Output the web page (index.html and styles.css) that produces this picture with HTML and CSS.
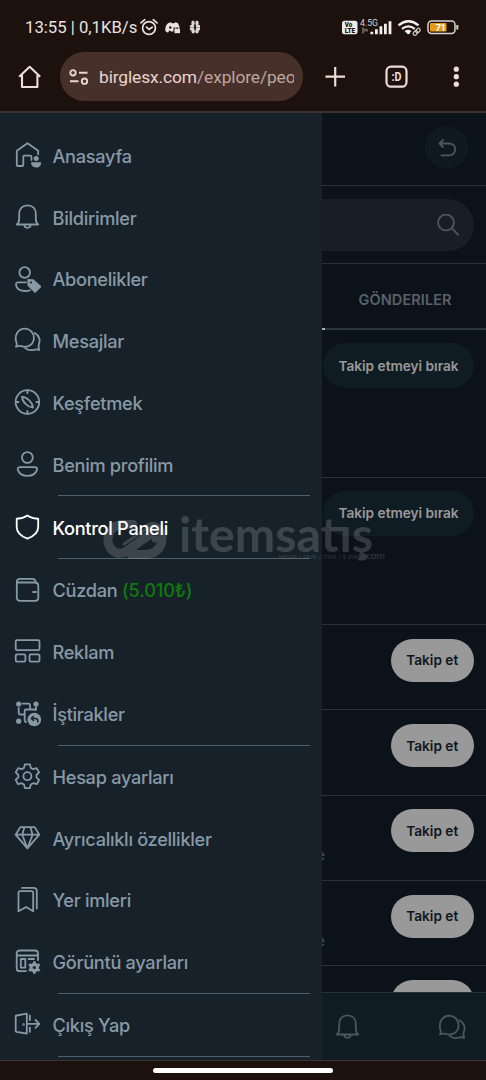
FILE: index.html
```html
<!DOCTYPE html>
<html lang="tr">
<head>
<meta charset="utf-8">
<title>Keşfetmek</title>
<link rel="stylesheet" href="styles.css">
</head>
<body>
<div class="phone">
  <header class="chrome">
    <div class="status">
      <span class="clock">13:55 | 0,1KB/s</span>
      <svg class="status-left" width="60" height="20" viewBox="0 0 60 20">
        <g fill="none" stroke="#e9e3e0" stroke-width="1.7" stroke-linecap="round"><circle cx="9" cy="10" r="6.4"/><path d="M1 4.900 4.700 1.700M17 4.900 13.300 1.700M6.500 9.200 9 11.500l3.200-2.300"/></g>
        <path d="M28 5.200l2.500-1 1.500 1h2l1.500-1 2.500 1 1.800 4.300h-6.300v4h-2.500l-1.500-1.200-1.500 2.400-2.600-1.500c-.5-3.500.3-6 2.600-8z" fill="#e9e3e0"/><circle cx="30.300" cy="9.500" r="1.200" fill="#1d110e"/><path d="M34.500 10.700h5.500v4.500h-5.500z" fill="#e9e3e0"/><path d="M35.700 10.700V9.500a1.500 1.500 0 0 1 3 0v1.200" fill="none" stroke="#e9e3e0"/>
        <g fill="#dcd8d5"><ellipse cx="53" cy="5" rx="1.700" ry="2.600"/><ellipse cx="57" cy="5" rx="1.700" ry="2.600"/><ellipse cx="52" cy="8.300" rx="2.400" ry="1.500"/><ellipse cx="58" cy="8.300" rx="2.400" ry="1.500"/><ellipse cx="52" cy="11" rx="2.400" ry="1.500"/><ellipse cx="58" cy="11" rx="2.400" ry="1.500"/><ellipse cx="53.200" cy="13.300" rx="1.700" ry="2.200"/><ellipse cx="57" cy="13.300" rx="1.700" ry="2.200"/></g>
      </svg>
      <svg class="status-right" width="118" height="20" viewBox="0 0 118 20">
        <rect x="0" y="2.700" width="15.500" height="13.500" rx="2.500" fill="#eeeae8"/>
        <g class="tiny"><text x="2.700" y="8.900" font-size="6.500" textLength="7.500" lengthAdjust="spacingAndGlyphs">Vo</text><text x="2.700" y="14.800" font-size="6.500" textLength="10.500" lengthAdjust="spacingAndGlyphs">LTE</text></g>
        <text class="net" x="18" y="7.500" font-size="8.500" textLength="18" lengthAdjust="spacingAndGlyphs">4.5G</text>
        <path d="M21 9.500v6M23 10.500v3M25 11v2.500" stroke="#aaa3a0"/>
        <path d="M29.800 13.700v2.500M34.400 11.200v5M38.900 8.200v8M43.400 5.700v10.500M48 3.200v13" stroke="#f2eeec" stroke-width="2.800"/>
        <g fill="none" stroke="#f2eeec" stroke-width="2.300"><path d="M56.500 7.300q10-8 20 0M60 10.900q6.400-5 12.800 0"/><path d="M63.300 13.900q2.900-2 5.400 0" /></g><circle cx="66.300" cy="14.600" r="1.600" fill="#fff"/>
        <g transform="rotate(-45 74.500 14)" fill="none" stroke="#d7d0cc" stroke-width="1.200"><rect x="70.500" y="12.300" width="5" height="3.400" rx="1.700"/><rect x="74" y="12.300" width="5" height="3.400" rx="1.700"/></g>
        <rect x="86" y="3" width="27" height="12.500" rx="3.500" fill="none" stroke="#d9d3cf" stroke-width="1.500"/><rect x="88" y="5" width="16.500" height="8.500" rx="1" fill="#e59a1c"/><path d="M115.300 7v4.500" stroke="#d9d3cf" stroke-width="2"/>
        <text class="charge" x="93.500" y="12.700" font-size="9.500" textLength="10.500">71</text>
      </svg>
    </div>
    <div class="toolbar">
      <svg class="home" width="24" height="24" viewBox="0 0 24 24" fill="none" stroke="#efdcd7" stroke-width="2.100" stroke-linejoin="round"><path d="M1.200 11.800 11.700 1.800 22.200 11.800M4 10v12h15.400V10"/></svg>
      <div class="address">
        <svg width="20" height="16" viewBox="0 0 20 16" fill="none" stroke="#e6d5d0" stroke-width="1.900"><circle cx="4" cy="3.800" r="2.700"/><path d="M10 3.800h8.500M1 12.200h8.500"/><circle cx="15.500" cy="12.200" r="2.700"/></svg>
        <span class="url">birglesx.com<span>/explore/peo</span></span>
      </div>
      <svg class="actions" width="150" height="24" viewBox="0 0 150 24" fill="none" stroke="#efdcd7" stroke-width="2.200"><path d="M.500 11.700H20M10.200 2v19.500"/><rect x="61.500" y="1.700" width="20" height="20" rx="4.500"/><text class="tabs" x="66.500" y="15.800" font-size="12" textLength="10" lengthAdjust="spacingAndGlyphs">:D</text><g fill="#efdcd7" stroke="none"><circle cx="131.300" cy="4.200" r="2.600"/><circle cx="131.300" cy="11.700" r="2.600"/><circle cx="131.300" cy="19.200" r="2.600"/></g></svg>
    </div>
  </header>

  <div class="page">
    <nav class="drawer">
      <a class="item"><svg class="icon" viewBox="0 0 27 27"><path d="M24.200 12.300V8.700L13.500 1.200 2.800 8.700V23q0 1 1 1h4.500q1 0 1-1v-8.300q0-1 1-1H16q1.500 0 1.500 1.500V18"/><circle class="dot" cx="22.200" cy="16.600" r="2.500"/><path class="dot" d="M17.200 20.300h9.800c1 7-10.800 7-9.800 0z"/></svg><span>Anasayfa</span></a>
      <a class="item"><svg class="icon" viewBox="0 0 27 27"><path d="M2.800 20.500c1.800-1.500 2.400-3 2.400-6V9.800C5.200 4.500 8.500 1.300 13.500 1.300s8.300 3.200 8.300 8.500v4.700c0 3 .6 4.500 2.400 6zM10.200 21c.4 3.700 6.200 3.700 6.600 0"/></svg><span>Bildirimler</span></a>
      <a class="item"><svg class="icon" viewBox="0 0 27 27"><circle cx="10.700" cy="6.500" r="5.300"/><path d="M12 16.300H4.300c-1.700 0-2.500 1-2.300 2.500.6 4.300 5 6.200 9.500 6.200 1.700 0 3.200-.2 4.500-.8"/><path class="fill" d="M14.300 14l4.700.1 7.300 6.500-5.200 5.200-6.700-6.400z"/><circle cx="17" cy="16.500" r="1.100" fill="#17212a" stroke="none"/></svg><span>Abonelikler</span></a>
      <a class="item"><svg class="icon" viewBox="0 0 27 27"><path d="M2 19.700c1-1.700.9-2.500.5-4C-.2 8 4.500 1.700 10.700 1.700c5.200 0 9.200 4 9.200 9.100 0 6.500-6 10.600-12.500 8.300-2-.6-3.400-.2-5.400.6z"/><path d="M20.700 6c4.300 2.300 6 7 4.200 11.200-.5 1.500-.5 3 .3 5.800-2.300-.8-3.500-.8-5.400-.2-3.300.9-6.200.3-8.600-1.700"/></svg><span>Mesajlar</span></a>
      <a class="item"><svg class="icon" viewBox="0 0 27 27"><circle cx="13.400" cy="13" r="11.800"/><path d="M8 7.600c4.500.3 10.500 5.300 11 11-5-.2-10.700-5.400-11-11zM13.400 1.500v2.700M13.400 22v2.700M2 13h2.500M22.500 13H25"/></svg><span>Keşfetmek</span></a>
      <a class="item"><svg class="icon" viewBox="0 0 27 27"><circle cx="13.400" cy="6.500" r="5.400"/><path d="M6.200 16.100h14.400c2 0 3 1.200 2.300 3-1.400 4-5 5.700-9.500 5.700s-8.100-1.700-9.500-5.700c-.7-1.800.3-3 2.300-3z"/></svg><span>Benim profilim</span></a>
      <hr>
      <a class="item active"><svg class="icon" viewBox="0 0 27 27"><path d="M13.400 1.400c3.200 2.200 6.800 3.200 10.800 3.200v8.200c0 6.300-4.600 9.600-10.800 11.800C7.200 22.400 2.700 19.100 2.700 12.800V4.600c4 0 7.500-1 10.700-3.200z"/></svg><span>Kontrol Paneli</span></a>
      <hr>
      <a class="item"><svg class="icon" viewBox="0 0 27 27"><path d="M2.800 5.500h18q3.500 0 3.500 3v12.300q0 3-3 3h-15q-3.500 0-3.500-3.300V5c0-2 1.200-3.200 3.200-3.200h12q3.500 0 3.800 3.500M19 15h3"/></svg><span>Cüzdan <span class="balance">(5.010₺)</span></span></a>
      <a class="item"><svg class="icon" viewBox="0 0 27 27"><rect x="1.700" y="2.100" width="23.800" height="10" rx="1.300"/><rect x="1.700" y="16.400" width="9.700" height="7.200" rx="1.300"/><rect x="15.500" y="16.400" width="10" height="7.200" rx="1.300"/></svg><span>Reklam</span></a>
      <a class="item"><svg class="icon" viewBox="0 0 27 27"><path d="M8.500 3.700h6q1.500 0 1.500 2v2.800q0 1 1 1h4.500M22 7v3M4.700 8v5q0 1.500 1.500 1.500h4.500V10.500q0-1 1-1H16M10.700 14.500v6q0 1.500 1.300 1.500"/><circle class="dot" cx="4.700" cy="4" r="2.600"/><circle class="dot" cx="22" cy="4" r="2.600"/><circle class="dot" cx="4.700" cy="21.200" r="2.600"/><circle class="dot" cx="20.300" cy="19.500" r="6.800"/><path class="cutout" d="M23.800 22v-1q0-2.500-2.500-2.500H17.500m2-2-2.200 2 2.200 2"/></svg><span>İştirakler</span></a>
      <hr>
      <a class="item"><svg class="icon" viewBox="0 0 27 27"><path d="M10.900 1.300h5l.9 3.600 2.300 1.300 3.600-1 2.400 4.200-2.600 2.600v2.400l2.600 2.600-2.400 4.200-3.600-1-2.300 1.300-.9 3.600h-5L10 21.500l-2.300-1.300-3.600 1L1.700 17l2.600-2.600V12L1.700 9.400l2.400-4.200 3.600 1L10 4.900z"/><circle cx="13.400" cy="13.200" r="4"/></svg><span>Hesap ayarları</span></a>
      <a class="item"><svg class="icon" viewBox="0 0 27 27"><path d="M6.300 2.100h14.400l4.600 7.600-11.900 13.600L1.600 9.700zM1.600 9.700h23.700M10.500 2.100 8.200 9.700l5.200 13.600 5.200-13.600-2.300-7.600"/></svg><span>Ayrıcalıklı özellikler</span></a>
      <a class="item"><svg class="icon" viewBox="0 0 27 27"><path d="M6.300 4.200h11.300q1.600 0 1.600 1.600v18.500l-7-4.300-7.700 4.300V5.800q0-1.600 1.800-1.600zM8 .900h11.500q3.300 0 3.300 3.300v17.300"/></svg><span>Yer imleri</span></a>
      <a class="item"><svg class="icon" viewBox="0 0 27 27"><path d="M24 12V5.500q0-3-3-3H6q-3.300 0-3.300 3v14.700q0 3 3 3H12M2.700 7.500H24M6.800 11h4.500v8.700H6.800zM14.500 11H20"/><circle cx="20.300" cy="19.500" r="3.300" stroke-width="3"/><path class="teeth" d="M20.300 13.200v12.600M14.900 16.300l10.800 6.400M14.900 22.700l10.800-6.400"/><circle class="hole" cx="20.300" cy="19.500" r="1.600"/></svg><span>Görüntü ayarları</span></a>
      <hr>
      <a class="item"><svg class="icon" viewBox="0 0 27 27"><path d="M2.500 4.500 12.800 2.600v20L2.500 20.800q-.8-.2-.8-1V5.300q0-.7.800-.8zM15.800 4.500V9M15.800 16.500v4.300M12.800 12.900h12M21.500 9l3.900 3.900-3.900 3.900"/><circle class="fill" cx="9.500" cy="13.500" r=".4"/></svg><span>Çıkış Yap</span></a>
      <hr>
    </nav>

    <main class="feed">
      <div class="top"><div class="back"><svg width="20" height="20" viewBox="0 0 20 20"><path d="M6 2 2.500 5.500 6 9M2.500 5.500h9.800a5.500 5.500 0 0 1 0 11.800H4.500"/></svg></div></div>
      <div class="search"><div class="field"><svg width="22" height="22" viewBox="0 0 22 22"><circle cx="9" cy="8.500" r="7.900"/><path d="m14.700 14.200 6.300 6.300"/></svg></div></div>
      <div class="tab"><span>GÖNDERILER</span><i></i></div>
      <div class="row tall first"><button class="following">Takip etmeyi bırak</button></div>
      <div class="row tall"><button class="following">Takip etmeyi bırak</button></div>
      <div class="row"><button class="follow">Takip et</button></div>
      <div class="row"><button class="follow">Takip et</button></div>
      <div class="row"><span class="bio">e</span><button class="follow">Takip et</button></div>
      <div class="row"><span class="bio">e</span><button class="follow">Takip et</button></div>
      <div class="row cut"><button class="follow"></button></div>
      <div class="dock">
        <svg width="27" height="27" viewBox="0 0 27 27"><path d="M2.800 20.500c1.800-1.500 2.400-3 2.400-6V9.800C5.200 4.500 8.500 1.300 13.500 1.300s8.300 3.200 8.300 8.500v4.700c0 3 .6 4.500 2.400 6zM10.200 21c.4 3.700 6.200 3.700 6.600 0"/></svg>
        <svg width="28" height="28" viewBox="0 0 27 27"><path d="M2 19.700c1-1.700.9-2.500.5-4C-.2 8 4.500 1.700 10.700 1.700c5.200 0 9.200 4 9.200 9.100 0 6.500-6 10.600-12.500 8.300-2-.6-3.400-.2-5.400.6z"/><path d="M20.700 6c4.300 2.300 6 7 4.200 11.200-.5 1.500-.5 3 .3 5.800-2.300-.8-3.500-.8-5.400-.2-3.300.9-6.200.3-8.600-1.700"/></svg>
      </div>
    </main>
  </div>

  <footer class="gesture"><div class="pill"></div></footer>

  <svg class="watermark" width="290" height="52" viewBox="0 0 290 52">
    <g fill="none" stroke="#fff" stroke-width="9" stroke-linecap="round" stroke-linejoin="round"><path d="M31 12.500H21C6 12.500 2 30 10 38c5 5 11 4 16 0l21-15"/><path d="M29 42.500h14c16 0 21-16 14-25-3-3-7-4-10-2"/></g>
    <path d="M22 32 44 17" fill="none" stroke="#fff" stroke-width="3" stroke-linecap="round"/>
    <circle cx="53" cy="27" r="3.500"/>
    <text class="brand" x="77" y="40" font-size="48" textLength="194" lengthAdjust="spacingAndGlyphs">itemsatış</text>
    <text x="177" y="47" font-size="5" textLength="79" lengthAdjust="spacing">HESAP / SKIN / ITEM / E-PIN</text>
    <circle cx="260.500" cy="44.500" r="3.300"/>
    <text x="264" y="47.300" font-size="8.500" textLength="19" lengthAdjust="spacingAndGlyphs">com</text>
  </svg>
</div>
</body>
</html>
```
FILE: styles.css
```css
* { box-sizing: border-box; }
body { margin: 0; background: #1d110e; }
.phone { position: relative; width: 486px; height: 1080px; overflow: hidden; display: flex; flex-direction: column; font-family: Inter, sans-serif; }
svg { display: block; flex: none; }

.chrome { height: 113px; flex: none; background: #1d110e; border-bottom: 2px solid #3e312f; font-family: Roboto, sans-serif; }
.status { display: flex; align-items: center; height: 37px; padding: 18px 0 0 25px; }
.clock { color: #e9e3e0; font-size: 16.7px; line-height: 20px; width: 115px; white-space: nowrap; }
.status-right { margin-left: 142px; }
.tiny { font-weight: 900; fill: #1d110e; }
.net { fill: #d8d2cf; }
.charge { fill: #fff; font-weight: 700; }
.toolbar { display: flex; align-items: center; height: 49px; margin-top: 15px; }
.home { margin-left: 18px; }
.address { display: flex; align-items: center; width: 243px; height: 49px; margin-left: 18px; padding: 0 9px 0 9px; border-radius: 25px; background: #48302a; }
.url { margin-left: 10px; width: 194.5px; overflow: hidden; white-space: nowrap; color: #e6d5d0; font-size: 17.4px; letter-spacing: -0.12px; line-height: 24px; }
.url span { color: #bba69f; }
.actions { margin-left: 22px; }
.tabs { fill: #efdcd7; stroke: none; font-weight: 700; }

.page { display: grid; grid-template-columns: 322px 164px; height: 947px; flex: none; overflow: hidden; }
.drawer { background: #17212a; padding-top: 11.6px; }
.item { display: flex; align-items: center; height: 61.8px; padding-left: 14px; color: #8899a6; font-size: 18.2px; font-weight: 500; letter-spacing: -0.3px; line-height: 24px; white-space: pre; }
.item > span { padding-top: 0.6px; }
.icon { width: 27px; height: 27px; margin-right: 11.5px; fill: none; stroke: currentColor; stroke-width: 1.8; stroke-linejoin: round; stroke-linecap: round; }
.icon .fill { fill: currentColor; }
.icon .dot { fill: currentColor; stroke: none; }
.icon .cutout { stroke: #17212a; stroke-width: 1.5; }
.icon .teeth { stroke-width: 2.6; stroke-linecap: butt; }
.icon .hole { fill: #17212a; stroke: none; }
.active { color: #fff; }
.balance { color: #0a7d0c; letter-spacing: -0.1px; }
.drawer hr { height: 1px; border: 0; margin: 0 12px 0 58px; background: #4c606d; }

.feed { background: #0b1219; display: flex; flex-direction: column; overflow: hidden; }
.feed svg { fill: none; stroke: #4c565e; stroke-width: 1.8; stroke-linecap: round; stroke-linejoin: round; }
.top { height: 73px; flex: none; border-bottom: 1px solid #29323b; display: flex; justify-content: flex-end; padding: 13px 18px 0 0; }
.back { width: 43px; height: 43px; border-radius: 50%; background: #0f1a20; display: flex; align-items: center; justify-content: center; }
.search { height: 78px; flex: none; border-bottom: 1px solid #29323b; padding: 13px 12px 0 0; }
.field { height: 52px; border-radius: 0 26px 26px 0; background: #171e27; display: flex; align-items: center; justify-content: flex-end; padding-right: 15px; }
.tab { height: 66px; flex: none; display: flex; flex-direction: column; justify-content: space-between; border-bottom: 2px solid #2b3740; color: #59616a; font-size: 14.5px; font-weight: 600; letter-spacing: 0.1px; line-height: 20px; padding: 26px 0 0 36.5px; }
.tab i { width: 2.5px; height: 2px; margin: 0 0 -2px -36.5px; background: #aaa; }
.row { height: 85.3px; flex: none; display: flex; justify-content: flex-end; padding: 13.6px 12.5px 0 0; border-bottom: 1px solid #29323b; }
.tall { height: 147.4px; padding: 13px 12px 0 0; }
.first { height: 147.8px; }
button { border: 0; padding: 0; font-family: inherit; font-size: 13.65px; font-weight: 600; border-radius: 23px; white-space: nowrap; }
.following { width: 151px; height: 45px; background: #101c23; color: #999; }
.follow { width: 82.5px; height: 43px; background: #999; color: #10171e; }
.bio { display: flex; justify-content: flex-end; width: 3px; height: 20px; margin: 36px auto 0 0; overflow: hidden; color: #4c565e; font-size: 14px; line-height: 20px; }
.cut { height: 26px; overflow: hidden; border: 0; }
.dock { flex: 1; background: #101c23; border-top: 1px solid #29323b; display: flex; justify-content: space-between; align-items: center; padding: 2px 20px 0 12px; }

.gesture { flex: 1; background: #1d110e; border-top: 1px solid #3e312f; padding: 7px 0 0 153px; }
.pill { width: 180px; height: 5px; border-radius: 3px; background: #fff; }

.watermark { position: absolute; left: 102px; top: 512px; opacity: 0.16; fill: #fff; font-family: Lato, sans-serif; }
.brand { font-weight: 700; }
```
